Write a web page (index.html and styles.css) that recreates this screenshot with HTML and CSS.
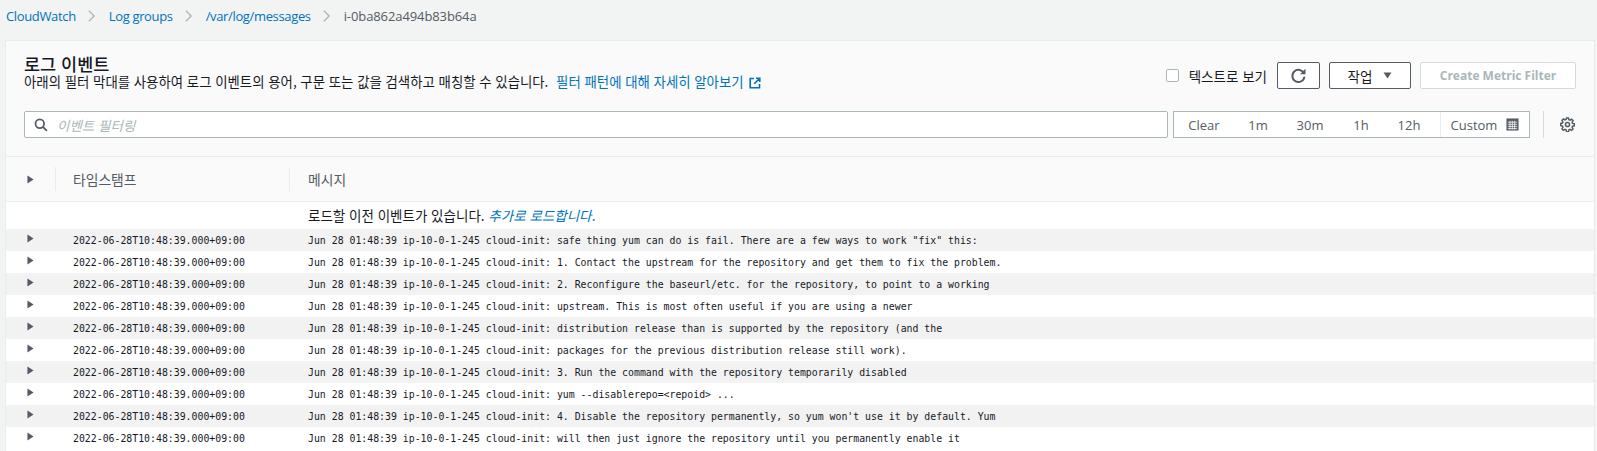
FILE: index.html
```html
<!DOCTYPE html>
<html lang="ko">
<head>
<meta charset="utf-8">
<title>CloudWatch Log events</title>
<link rel="stylesheet" href="styles.css">
</head>
<body>
<nav class="crumbs">
  <a href="#">CloudWatch</a>
  <svg class="sep" viewBox="0 0 10 16"><path d="M2 2l6 6-6 6"/></svg>
  <a href="#">Log groups</a>
  <svg class="sep" viewBox="0 0 10 16"><path d="M2 2l6 6-6 6"/></svg>
  <a href="#">/var/log/messages</a>
  <svg class="sep" viewBox="0 0 10 16"><path d="M2 2l6 6-6 6"/></svg>
  <span class="current">i-0ba862a494b83b64a</span>
</nav>
<main class="panel">
  <header class="head">
    <div class="top">
      <div class="title-block">
        <h1>로그 이벤트</h1>
        <p>아래의 필터 막대를 사용하여 로그 이벤트의 용어, 구문 또는 값을 검색하고 매칭할 수 있습니다. <a class="learn" href="#">필터 패턴에 대해 자세히 알아보기</a>
          <svg class="ext" viewBox="0 0 12 12"><path d="M5 1.5H1.2v9.3h9.3V7M7 1.2h3.8V5M10.5 1.5L5.2 6.8"/></svg></p>
      </div>
      <div class="actions">
        <label class="check"><span class="box"></span>텍스트로 보기</label>
        <button class="btn refresh" type="button"><svg viewBox="0 0 16 16"><path d="M13.2 6.2A5.7 5.7 0 1 0 13.6 9"/><path class="fill" d="M14.6 1.6v5.2H9.4z"/></svg></button>
        <button class="btn action" type="button">작업<svg viewBox="0 0 10 8"><path class="fill" d="M0.5 0.5h9L5 7.5z"/></svg></button>
        <button class="btn disabled" type="button">Create Metric Filter</button>
      </div>
    </div>
    <div class="filter">
      <div class="search">
        <svg viewBox="0 0 16 16"><circle cx="6.6" cy="6.6" r="4.9"/><path d="M10.2 10.2l4.6 4.6"/></svg>
        <span>이벤트 필터링</span>
      </div>
      <div class="range">
        <span class="r clear">Clear</span><span class="r m1">1m</span><span class="r m30">30m</span><span class="r h1">1h</span><span class="r h12">12h</span>
        <span class="r custom">Custom
          <svg viewBox="0 0 14 14"><rect class="fill" x="0.5" y="0.5" width="13" height="13"/><path class="grid" d="M2 4.5h10M2 6.8h10M2 9.1h10M2 11.4h10M4.3 3v9.5M6.8 3v9.5M9.3 3v9.5"/></svg></span>
      </div>
      <div class="gear-wrap">
        <svg class="gear" viewBox="0 0 16 16"><path d="M6.9 1h2.2l.4 1.9 1.2.5 1.7-1 1.5 1.5-1 1.7.5 1.2 1.9.4v2.2l-1.9.4-.5 1.2 1 1.7-1.5 1.5-1.7-1-1.2.5-.4 1.9H6.9l-.4-1.9-1.2-.5-1.7 1-1.5-1.5 1-1.7-.5-1.2L.7 9.1V6.9l1.9-.4.5-1.2-1-1.7 1.5-1.5 1.7 1 1.2-.5z"/><circle cx="8" cy="8" r="2.2"/></svg>
      </div>
    </div>
  </header>
  <div class="thead">
    <div class="c-arrow"><svg class="tri" viewBox="0 0 8 10"><path d="M0.5 0.5L7.5 5 0.5 9.5z"/></svg></div>
    <div class="c-time">타임스탬프</div>
    <div class="c-msg">메시지</div>
  </div>
  <div class="loadmore">로드할 이전 이벤트가 있습니다. <a href="#">추가로 로드합니다.</a></div>
  <div class="rows">
    <div class="row"><div class="c-arrow"><svg class="tri" viewBox="0 0 8 10"><path d="M0.5 0.5L7.5 5 0.5 9.5z"/></svg></div><div class="c-time">2022-06-28T10:48:39.000+09:00</div><div class="c-msg">Jun 28 01:48:39 ip-10-0-1-245 cloud-init: safe thing yum can do is fail. There are a few ways to work "fix" this:</div></div>
    <div class="row"><div class="c-arrow"><svg class="tri" viewBox="0 0 8 10"><path d="M0.5 0.5L7.5 5 0.5 9.5z"/></svg></div><div class="c-time">2022-06-28T10:48:39.000+09:00</div><div class="c-msg">Jun 28 01:48:39 ip-10-0-1-245 cloud-init: 1. Contact the upstream for the repository and get them to fix the problem.</div></div>
    <div class="row"><div class="c-arrow"><svg class="tri" viewBox="0 0 8 10"><path d="M0.5 0.5L7.5 5 0.5 9.5z"/></svg></div><div class="c-time">2022-06-28T10:48:39.000+09:00</div><div class="c-msg">Jun 28 01:48:39 ip-10-0-1-245 cloud-init: 2. Reconfigure the baseurl/etc. for the repository, to point to a working</div></div>
    <div class="row"><div class="c-arrow"><svg class="tri" viewBox="0 0 8 10"><path d="M0.5 0.5L7.5 5 0.5 9.5z"/></svg></div><div class="c-time">2022-06-28T10:48:39.000+09:00</div><div class="c-msg">Jun 28 01:48:39 ip-10-0-1-245 cloud-init: upstream. This is most often useful if you are using a newer</div></div>
    <div class="row"><div class="c-arrow"><svg class="tri" viewBox="0 0 8 10"><path d="M0.5 0.5L7.5 5 0.5 9.5z"/></svg></div><div class="c-time">2022-06-28T10:48:39.000+09:00</div><div class="c-msg">Jun 28 01:48:39 ip-10-0-1-245 cloud-init: distribution release than is supported by the repository (and the</div></div>
    <div class="row"><div class="c-arrow"><svg class="tri" viewBox="0 0 8 10"><path d="M0.5 0.5L7.5 5 0.5 9.5z"/></svg></div><div class="c-time">2022-06-28T10:48:39.000+09:00</div><div class="c-msg">Jun 28 01:48:39 ip-10-0-1-245 cloud-init: packages for the previous distribution release still work).</div></div>
    <div class="row"><div class="c-arrow"><svg class="tri" viewBox="0 0 8 10"><path d="M0.5 0.5L7.5 5 0.5 9.5z"/></svg></div><div class="c-time">2022-06-28T10:48:39.000+09:00</div><div class="c-msg">Jun 28 01:48:39 ip-10-0-1-245 cloud-init: 3. Run the command with the repository temporarily disabled</div></div>
    <div class="row"><div class="c-arrow"><svg class="tri" viewBox="0 0 8 10"><path d="M0.5 0.5L7.5 5 0.5 9.5z"/></svg></div><div class="c-time">2022-06-28T10:48:39.000+09:00</div><div class="c-msg">Jun 28 01:48:39 ip-10-0-1-245 cloud-init: yum --disablerepo=&lt;repoid&gt; ...</div></div>
    <div class="row"><div class="c-arrow"><svg class="tri" viewBox="0 0 8 10"><path d="M0.5 0.5L7.5 5 0.5 9.5z"/></svg></div><div class="c-time">2022-06-28T10:48:39.000+09:00</div><div class="c-msg">Jun 28 01:48:39 ip-10-0-1-245 cloud-init: 4. Disable the repository permanently, so yum won't use it by default. Yum</div></div>
    <div class="row"><div class="c-arrow"><svg class="tri" viewBox="0 0 8 10"><path d="M0.5 0.5L7.5 5 0.5 9.5z"/></svg></div><div class="c-time">2022-06-28T10:48:39.000+09:00</div><div class="c-msg">Jun 28 01:48:39 ip-10-0-1-245 cloud-init: will then just ignore the repository until you permanently enable it</div></div>
  </div>
</main>
</body>
</html>
```
FILE: styles.css
```css
* { box-sizing: border-box; }
html, body { margin: 0; height: 451px; overflow: hidden; }
body {
  background: #f2f3f3;
  color: #16191f;
  font-family: "Open Sans", "Noto Sans CJK KR", sans-serif;
  font-size: 13px;
}
a { color: #0073bb; text-decoration: none; }

.crumbs {
  height: 40px;
  padding: 0 0 8px 6px;
  display: flex;
  align-items: center;
  font-size: 13px;
  letter-spacing: -0.35px;
}
.crumbs .current { color: #545b64; letter-spacing: -0.1px; }
.sep { width: 9px; height: 14px; margin: 0 13px 0 11px; fill: none; stroke: #aab7b8; stroke-width: 1.5; }

.panel {
  margin: 0 2px 0 5px;
  border: 1px solid #eaeded;
  border-bottom: 0;
  height: 411px;
  background: #fff;
}
.head {
  height: 116px;
  background: #fafafa;
  border-bottom: 1px solid #eaeded;
  padding: 13px 0 0 18px;
}
.top { display: flex; justify-content: space-between; height: 36px; }
.title-block h1 { margin: 0; font-size: 17.5px; line-height: 19px; font-weight: 500; font-family: "Noto Sans CJK KR", sans-serif; }
.title-block p { margin: 0; font-size: 13.4px; line-height: 17px; font-family: "Noto Sans CJK KR", sans-serif; }
.learn { margin-left: 4px; }
.ext { width: 12px; height: 12px; margin-left: 2px; vertical-align: -2px; fill: none; stroke: #0073bb; stroke-width: 1.6; }

.actions { display: flex; align-items: center; height: 27px; margin-top: 8px; padding-right: 18px; }
.check { display: flex; align-items: center; font-size: 13.5px; font-family: "Noto Sans CJK KR", sans-serif; margin-right: 10px; }
.box { width: 13px; height: 13px; border: 1px solid #aab7b8; border-radius: 2px; background: #fff; margin-right: 10px; }
.btn {
  height: 27px;
  border: 1px solid #545b64;
  border-radius: 2px;
  background: #fff;
  color: #545b64;
  font-family: "Noto Sans CJK KR", sans-serif;
  font-size: 13.5px;
  padding: 0;
  display: flex;
  align-items: center;
  justify-content: center;
}
.refresh { width: 43px; margin-right: 9px; }
.refresh svg { width: 17px; height: 17px; fill: none; stroke: #545b64; stroke-width: 1.8; }
.refresh .fill { fill: #545b64; stroke: none; }
.action { width: 82px; margin-right: 9px; gap: 11px; color: #16191f; }
.action svg { width: 9px; height: 7px; }
.action .fill { fill: #545b64; }
.disabled {
  width: 156px;
  border-color: #d5dbdb;
  color: #aab7b8;
  font-family: "Open Sans", sans-serif;
  font-weight: 700;
  font-size: 12px;
}

.filter { display: flex; align-items: center; margin-top: 21px; height: 27px; }
.search {
  width: 1144px;
  height: 27px;
  border: 1px solid #aab7b8;
  border-radius: 2px;
  background: #fff;
  display: flex;
  align-items: center;
  padding-left: 9px;
  color: #aab7b8;
  font-style: italic;
  font-family: "Noto Sans CJK KR", sans-serif;
  font-size: 13.5px;
}
.search svg { width: 14px; height: 14px; margin-right: 9px; fill: none; stroke: #545b64; stroke-width: 2; }
.range {
  width: 357px;
  height: 27px;
  margin-left: 5px;
  border: 1px solid #aab7b8;
  background: #fff;
  display: flex;
  align-items: center;
  color: #545b64;
  font-size: 13px;
}
.r { display: block; text-align: center; }
.clear { width: 60px; }
.m1 { width: 48px; }
.m30 { width: 56px; }
.h1 { width: 46px; }
.h12 { width: 50px; }
.custom {
  flex: 1;
  height: 100%;
  margin-left: 6px;
  border-left: 1px solid #eaeded;
  display: flex;
  align-items: center;
  justify-content: center;
  gap: 9px;
}
.custom svg { width: 13px; height: 13px; }
.custom .fill { fill: #545b64; }
.custom .grid { stroke: #fff; stroke-width: 0.8; fill: none; }
.gear-wrap { margin-left: 13px; padding-left: 16px; border-left: 1px solid #d5dbdb; height: 27px; display: flex; align-items: center; }
.gear { width: 15px; height: 15px; fill: none; stroke: #545b64; stroke-width: 1.6; }

.thead {
  height: 45px;
  display: flex;
  align-items: center;
  background: #fafafa;
  border-bottom: 1px solid #eaeded;
  color: #545b64;
  font-family: "Noto Sans CJK KR", sans-serif;
  font-size: 13.8px;
}
.c-arrow { width: 50px; padding-left: 21px; display: flex; align-items: center; }
.c-time { width: 234px; padding-left: 17px; }
.c-msg { padding-left: 18px; white-space: pre; }
.thead .c-arrow { height: 24px; border-right: 1px solid #eaeded; }
.thead .c-time { height: 24px; line-height: 24px; border-right: 1px solid #eaeded; }
.tri { width: 7px; height: 9px; fill: #545b64; }

.loadmore {
  height: 27px;
  padding-left: 302px;
  line-height: 27px;
  font-family: "Noto Sans CJK KR", sans-serif;
  font-size: 13.5px;
}
.loadmore a { font-style: italic; }

.row {
  height: 22px;
  display: flex;
  align-items: center;
  font-family: "DejaVu Sans Mono", monospace;
  font-size: 9.85px;
  color: #16191f;
}
.row:nth-child(odd) { background: #f2f2f2; }
.row .c-arrow { padding-bottom: 3px; }
```
